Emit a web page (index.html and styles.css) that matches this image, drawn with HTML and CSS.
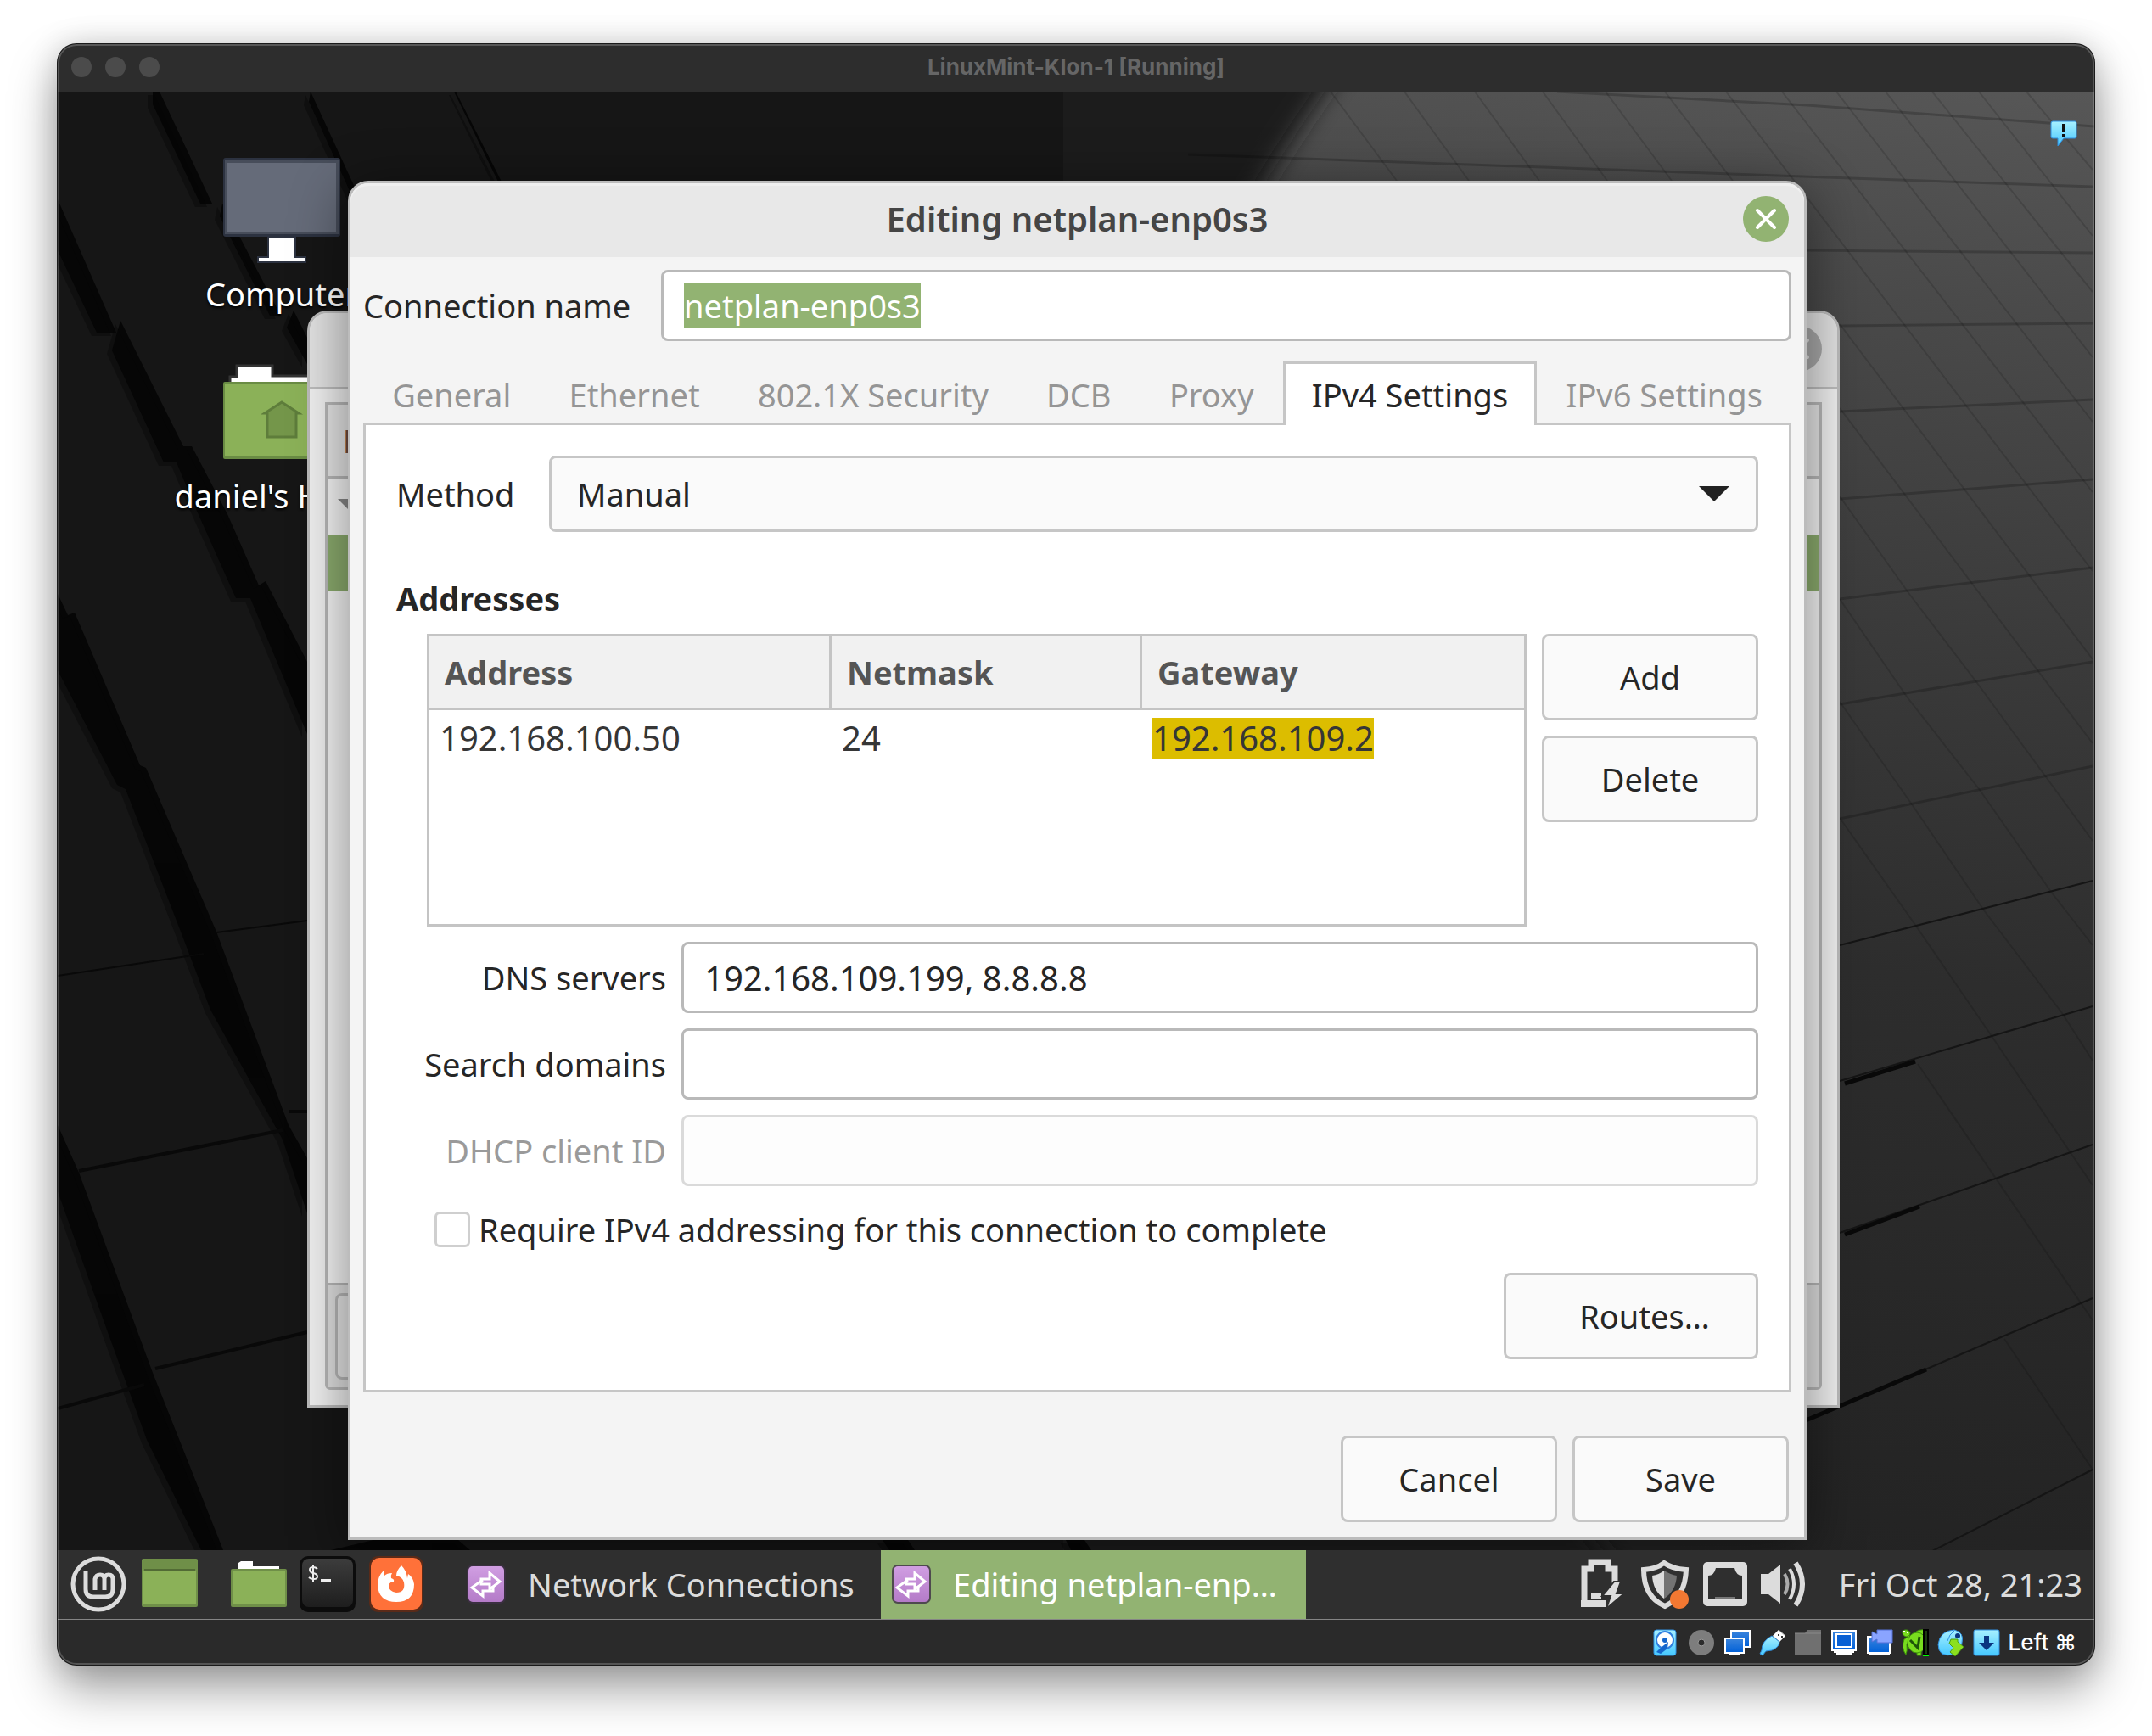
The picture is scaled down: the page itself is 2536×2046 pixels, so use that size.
FILE: index.html
```html
<!DOCTYPE html>
<html lang="en">
<head>
<meta charset="utf-8">
<title>LinuxMint-Klon-1 [Running]</title>
<link rel="stylesheet" href="styles.css">
</head>
<body>
<svg class="defs" aria-hidden="true">
  <defs>
    <linearGradient id="violet" x1="0" y1="0" x2="0" y2="1"><stop offset="0" stop-color="#d09ee2"/><stop offset="1" stop-color="#b47bc8"/></linearGradient>
    <linearGradient id="cyan" x1="0" y1="0" x2="0" y2="1"><stop offset="0" stop-color="#a8f0ff"/><stop offset="1" stop-color="#45c8ff"/></linearGradient>
    <linearGradient id="blue" x1="0" y1="0" x2="0" y2="1"><stop offset="0" stop-color="#3a84dc"/><stop offset="1" stop-color="#0060d8"/></linearGradient>
    <linearGradient id="term" x1="0" y1="0" x2="0" y2="1"><stop offset="0" stop-color="#3c3c3c"/><stop offset="1" stop-color="#1e1e1e"/></linearGradient>
    <symbol id="net" viewBox="0 0 48 48">
      <rect x="1" y="1" width="46" height="46" rx="7" fill="#3d2f45" opacity=".8"/>
      <rect x="3" y="3" width="42" height="42" rx="5" fill="url(#violet)"/>
      <path d="M28 11l12 10-12 9v-6H18v-6h10z" fill="none" stroke="#fff" stroke-width="3"/>
      <path d="M20 19L7 28l13 10v-6h12v-6" fill="none" stroke="#fff" stroke-width="3"/>
    </symbol>
  </defs>
</svg>

<main class="vm">
  <header class="vm-title">
    <div class="lights"><span></span><span></span><span></span></div>
    <h1>LinuxMint-Klon-1 [Running]</h1>
  </header>

  <section class="desktop">
    <svg class="wallpaper" viewBox="68 108 2400 1719" preserveAspectRatio="none" aria-hidden="true">
      <defs>
        <linearGradient id="sky" x1="1" y1="0" x2=".8" y2="1">
          <stop offset="0" stop-color="#575757"/><stop offset=".15" stop-color="#4a4a4a"/><stop offset=".38" stop-color="#3a3a3a"/><stop offset=".6" stop-color="#2d2d2d"/><stop offset="1" stop-color="#232323"/>
        </linearGradient>
        <linearGradient id="night" x1="0" y1="0" x2="1" y2="0"><stop offset="0" stop-color="#131313"/><stop offset="1" stop-color="#1d1d1d"/></linearGradient>
        <filter id="soft" x="-10%" y="-10%" width="120%" height="120%"><feGaussianBlur stdDeviation="14"/></filter>
      </defs>
      <rect x="68" y="108" width="2400" height="1719" fill="url(#sky)"/>
      <path d="M0 0H1640Q1540 130 1470 250Q1400 500 1500 1000T1950 1900H0z" fill="url(#night)" filter="url(#soft)"/>
      <g id="gaps" fill="#060606">
        <path d="M188 108l62 132h-14l-56-117v-15zM262 240l69 132h-13l-59-117zM346 366l16 32v31l-24-43z"/>
        <path d="M366 108l60 130h-8l-54-118zM537 108l54 106h-4l-52-106z"/>
        <path d="M68 235l69 157h-23L68 295zM142 378l74 148 10 0 42 80 37 84 8-5 49 95v85l-67-160h-17l-47-105-23-55h-15l-61-132z"/>
        <path d="M68 700l12 25 8-3 77 180 7 3 83 193 85 228 22 39v65l-29-87-85-153-35-92-65-168-10-5-70-135z"/>
        <path d="M68 1326l25 56 87 236 83 209h-26l-64-130-50-138-55-155z"/>
        <path d="M440 1815h100l14 12H390zM1040 1815h30l8 12h-30zM1256 1815h22l8 12h-24z"/>
      </g>
      <use href="#gaps" transform="translate(-6 4)" opacity=".4"/>
      <g stroke="#090909" stroke-width="4" fill="none">
        <path d="M68 1150L240 1124M255 1099L362 1085" stroke-width="2"/>
        <path d="M93 1380L333 1332M340 1310h30M68 1660L170 1632M183 1613L362 1570"/>
      </g>
      <g stroke="#000" stroke-width="3" fill="none" opacity=".2">
        <path d="M1835 108L2130 124 2468 149M1400 182L1900 200 2466 220M2129 295L2466 298M2168 384L2466 381M2168 485L2466 471M2168 588L2466 565M2168 706L2466 669M2168 830L2466 780M2168 965L2466 903"/>
      </g>
      <g stroke="#000" stroke-width="2" fill="none" opacity=".14">
        <path d="M1568 108l78 105M1655 108l76 105M1738 108l76 105M1818 108l76 105M1892 108l78 105M1962 108l80 105M2034 108l432 565M2100 108l366 472M2164 108l302 389M2222 108l244 313M2277 108l189 236M2332 108l134 170M2388 108l78 92M2168 382l298 395M2168 481l298 395M2168 585l82 115 80 105 82 112 54 74M2168 706l79 115 86 110 84 120 49 63M2168 827l85 121 85 125 92 121 36 56M2168 964l89 126 90 131 119 176M2260 1254l206 302M2362 1578l104 154"/>
      </g>
      <g stroke="#151515" stroke-width="2" fill="none">
        <path d="M2168 1114L2466 1038M2168 1274L2466 1186M2168 1453L2466 1349M2128 1674L2466 1530M2277 1828L2466 1732"/>
        <path d="M2174 1277L2257 1251M2174 1455L2262 1422M2128 1674L2270 1614" stroke="#090909" stroke-width="5"/>
      </g>
    </svg>

    <a class="shortcut computer" href="#computer">
      <svg width="140" height="126" viewBox="0 0 140 126" aria-hidden="true">
        <rect x="1" y="2" width="138" height="93" rx="3" fill="#2c3240"/>
        <rect x="3" y="5" width="134" height="87" fill="#474d5a"/>
        <rect x="6" y="8" width="128" height="81" fill="#656b79"/>
        <path d="M54 95h32v24h12v6H42v-6h12z" fill="#fff" stroke="#2c3240" stroke-width="2"/>
      </svg>
      <span>Computer</span>
    </a>
    <a class="shortcut home" href="#home">
      <svg width="140" height="114" viewBox="0 0 140 114" aria-hidden="true">
        <path d="M9 24v-8h8V3h42v12h72v9z" fill="#fff" stroke="#333" stroke-width="3"/>
        <rect x="1" y="22" width="138" height="91" rx="2" fill="#6a8c44"/>
        <rect x="3" y="25" width="134" height="85" fill="#8bb158"/>
        <path d="M50 59l20-13 20 13h-3v28H53V59z" fill="#74964a" stroke="#5e7d3b" stroke-width="3"/>
      </svg>
      <span>daniel's Home</span>
    </a>

    <section class="window connections" aria-label="Network Connections">
      <div class="c-head"><span class="close idle"><svg width="54" height="54" viewBox="0 0 54 54"><path d="M17 17l20 20M37 17L17 37" stroke="#ddd" stroke-width="4" stroke-linecap="round"/></svg></span></div>
      <div class="c-frame">
        <div class="c-cols">Name</div>
        <div class="c-group"><i></i></div>
        <div class="c-selected"></div>
        <div class="c-space"></div>
        <div class="c-tools"><button type="button" aria-label="Add connection"></button></div>
      </div>
    </section>

    <form class="window dialog">
      <header class="d-head">
        <h2>Editing netplan-enp0s3</h2>
        <button class="close" type="button" aria-label="Close">
          <svg width="54" height="54" viewBox="0 0 54 54"><path d="M17 17l20 20M37 17L17 37" stroke="#fff" stroke-width="4" stroke-linecap="round"/></svg>
        </button>
      </header>
      <div class="d-body">
        <div class="name-row">
          <label for="cname">Connection name</label>
          <input id="cname" class="field" type="text" value="netplan-enp0s3">
        </div>
        <nav class="tabs">
          <button type="button">General</button>
          <button type="button">Ethernet</button>
          <button type="button">802.1X Security</button>
          <button type="button">DCB</button>
          <button type="button">Proxy</button>
          <button type="button" class="active">IPv4 Settings</button>
          <button type="button">IPv6 Settings</button>
        </nav>
        <div class="panel">
          <div class="method">
            <label for="method">Method</label>
            <div class="select"><select id="method"><option>Manual</option></select></div>
          </div>
          <h3>Addresses</h3>
          <div class="addresses">
            <div class="table-box">
              <table>
                <thead><tr><th class="c1">Address</th><th class="c2">Netmask</th><th>Gateway</th></tr></thead>
                <tbody><tr><td>192.168.100.50</td><td>24</td><td><mark>192.168.109.2</mark></td></tr></tbody>
              </table>
            </div>
            <div class="side">
              <button class="btn" type="button">Add</button>
              <button class="btn" type="button">Delete</button>
            </div>
          </div>
          <div class="fields">
            <label for="dns">DNS servers</label>
            <input id="dns" class="field numeric" type="text" value="192.168.109.199, 8.8.8.8">
            <label for="search">Search domains</label>
            <input id="search" class="field" type="text">
            <label for="dhcp" class="off">DHCP client ID</label>
            <input id="dhcp" class="field" type="text" disabled>
          </div>
          <div class="require">
            <input id="req" type="checkbox"><label for="req">Require IPv4 addressing for this connection to complete</label>
          </div>
          <button class="btn routes" type="button">Routes…</button>
        </div>
      </div>
      <footer class="d-foot">
        <button class="btn" type="button">Cancel</button>
        <button class="btn" type="button">Save</button>
      </footer>
    </form>

    <button class="notice" type="button" aria-label="Notifications">
      <svg width="32" height="32" viewBox="0 0 32 32"><path d="M3 1h26q2 0 2 2v16q0 2-2 2H16l-7 9V21H3q-2 0-2-2V3q0-2 2-2z" fill="url(#cyan)" stroke="#2f8fe0"/><path d="M14 4h3v10h-3zM14 16h3v3h-3z" fill="#111"/></svg>
    </button>
  </section>

  <nav class="taskbar">
    <a href="#menu" aria-label="Menu"><svg width="66" height="66" viewBox="0 0 66 66" fill="none" stroke="#dcdcdc">
      <circle cx="33" cy="33" r="30" stroke-width="5"/>
      <path d="M18 17v22q0 9 9 9h14q9 0 9-9V27q0-5-5-5t-5 5v13M40 27q0-5-5-5t-6 5v13" stroke-width="5"/></svg></a>
    <a class="desk" href="#desktop" aria-label="Show desktop"><svg width="66" height="66" viewBox="0 0 66 66">
      <rect y="3" width="66" height="57" rx="2" fill="#6f8f48"/><rect x="2" y="18" width="62" height="39" fill="#8bb158"/><rect x="3" y="15" width="60" height="3" fill="#526b35"/></svg></a>
    <a href="#files" aria-label="Files"><svg width="66" height="66" viewBox="0 0 66 66">
      <path d="M9 16V8l3-2h14v6h31v4z" fill="#fff"/><rect y="15" width="66" height="45" rx="2" fill="#6f8f48"/><rect x="2" y="18" width="62" height="39" fill="#8bb158"/></svg></a>
    <a href="#terminal" aria-label="Terminal"><svg width="66" height="66" viewBox="0 0 66 66">
      <rect width="66" height="66" rx="10" fill="#0c0c0c"/><rect x="3" y="3" width="60" height="57" rx="8" fill="url(#term)"/>
      <path d="M21 15q-2-2-5-2-4 0-4 3 0 3 4 4 5 1 5 4t-4 3q-4 0-6-2M16 10v20" fill="none" stroke="#eee" stroke-width="2"/><path d="M25 27h12v3H25z" fill="#eee"/></svg></a>
    <a href="#firefox" aria-label="Firefox"><svg width="66" height="66" viewBox="0 0 66 66">
      <rect x="1" width="64" height="66" rx="11" fill="#5a2a18"/><rect x="3" y="2" width="60" height="61" rx="10" fill="#ff7139"/>
      <path d="M39 11q-6 6-6 12 7 1 9 8 2 12-9 12-9-1-9-9 2-4 6-4 1-3-3-4-1-3 1-6-6 0-9 3l-1-6q-7 7-7 17 1 20 22 20t21-21q-1-8-7-12l-1 5q-1-9-7-15z" fill="#fff"/></svg></a>
    <button class="task" type="button"><svg width="48" height="48"><use href="#net"/></svg><span>Network Connections</span></button>
    <button class="task on" type="button"><svg width="48" height="48"><use href="#net"/></svg><span>Editing netplan-enp…</span></button>
    <div class="tray">
      <svg width="54" height="60" viewBox="0 0 54 60"><path d="M4 53V12h8V4h20v8h8v18" fill="none" stroke="#dcdcdc" stroke-width="7"/><path d="M0 57V49h30v8z" fill="#dcdcdc"/><path d="M12 41h12v6H12z" fill="#dcdcdc"/><path d="M39 27L25 44h10l-5 15 21-18h-9l5-14z" fill="#dcdcdc" stroke="#2f2f2f" stroke-width="2"/></svg>
      <svg width="58" height="60" viewBox="0 0 58 60"><path d="M28 5q10 7 26 8-1 32-25 43Q4 45 4 13 19 12 28 5z" fill="none" stroke="#dcdcdc" stroke-width="6"/><path d="M28 14q-6 5-14 6 1 18 14 27z" fill="#dcdcdc"/><path d="M28 14q8 5 15 6-1 18-15 27z" fill="#737373"/><circle cx="46" cy="48" r="11" fill="#f37832"/></svg>
      <svg width="52" height="52" viewBox="0 0 52 52"><rect width="52" height="52" rx="5" fill="#dcdcdc"/><path d="M6 44V16q7 0 9-9h22q2 9 9 9v28z" fill="#2f2f2f"/><path d="M14 41h24v3H14z" fill="#777"/></svg>
      <svg width="56" height="54" viewBox="0 0 56 54"><path d="M0 15h9L23 4v46L9 39H0z" fill="#dcdcdc"/><g fill="none" stroke="#dcdcdc" stroke-width="4"><path d="M28 15q7 12 0 24" stroke="#aaa"/><path d="M34 9q10 18 0 36"/><path d="M41 2q16 25 0 50" stroke-width="6"/></g></svg>
      <time>Fri Oct 28, 21:23</time>
    </div>
  </nav>

  <footer class="status">
    <svg viewBox="0 0 32 32"><rect x="2" y="1" width="26" height="30" rx="3" fill="url(#cyan)" stroke="#2f8fe0"/><circle cx="15" cy="13" r="10" fill="#fff" stroke="#2f7fe0" stroke-width="2"/><circle cx="15" cy="13" r="3" fill="#1566cc"/><path d="M19 15l-9 7-5 5 5 2 8-6z" fill="#1566cc"/></svg>
    <svg viewBox="0 0 32 32"><circle cx="16" cy="16" r="15" fill="#7d7d7d"/><circle cx="16" cy="16" r="4" fill="#2b2b2b" stroke="#969696" stroke-width="1"/></svg>
    <svg viewBox="0 0 32 32"><rect x="9" y="2" width="22" height="19" fill="url(#blue)" stroke="#fff" stroke-width="2"/><rect x="2" y="11" width="22" height="17" fill="url(#blue)" stroke="#fff" stroke-width="2"/><path d="M7 28h13v3H7z" fill="#fff"/></svg>
    <svg viewBox="0 0 32 32"><path d="M23 1l8 7-7 7-8-7z" fill="#fff" stroke="#aaa"/><path d="M22 6h2v2h-2zM26 8h2v2h-2z" fill="#333"/><path d="M15 8l9 7q0 6-9 10l-7 1-4 5-3-2 2-4q0-11 12-17z" fill="url(#cyan)" stroke="#2f8fe0"/></svg>
    <svg viewBox="0 0 32 32"><path d="M0 5h12l3-4h16v30H0z" fill="#707070"/><path d="M0 5h31" stroke="#8a8a8a"/></svg>
    <svg viewBox="0 0 32 32"><rect x="2" y="2" width="28" height="23" fill="url(#blue)" stroke="#fff" stroke-width="2"/><rect x="7" y="6" width="18" height="15" fill="#0860d4" stroke="#fff" stroke-width="2"/><path d="M4 25h24v3h-3v3H7v-3H4z" fill="#fff"/></svg>
    <svg viewBox="0 0 32 32"><rect x="2" y="9" width="26" height="19" fill="url(#blue)" stroke="#fff" stroke-width="2"/><path d="M4 28h24v3H4z" fill="#fff"/><path d="M7 3l6 3V1h18v15H13v-4l-6 3z" fill="#8aa4ff" stroke="#5470d8"/></svg>
    <svg viewBox="0 0 32 32"><g fill="#78dc1e" stroke="#3c8f0a"><path d="M9 5q-1 5-6 7-4 10 2 18 2-4 1-12l4-6zM16 4q4-4 12-3l1 8-4 1zM18 26h5v5h-5z"/><ellipse cx="18" cy="16" rx="11" ry="12"/><path d="M1 2q6-3 9 2 0 5-5 5-5-2-4-7z"/></g><path d="M2 2h2v2H2zM6 3h2v2H6z" fill="#fff"/><path d="M10 13l9 9 2-13" fill="none" stroke="#1d5508" stroke-width="3"/><path d="M26 1h5v29h-5z" fill="#1c3a10" stroke="#000" stroke-width="2"/><path d="M25 31h7" stroke="#0f0" stroke-width="2"/></svg>
    <svg viewBox="0 0 32 32"><path d="M29 16q0 10-9 14Q1 34 1 18 3 2 20 1q12 3 9 15z" fill="url(#cyan)" stroke="#2f8fe0"/><path d="M20 2q-6 4-8 12" fill="none" stroke="#2f8fe0"/><circle cx="24" cy="8" r="3" fill="#0a3580"/><path d="M16 12h8v3l7 6-10 11-6-5 4-5-5-5z" fill="#8be01e" stroke="#4b9c10"/></svg>
    <svg viewBox="0 0 32 32"><rect x="1" y="1" width="30" height="30" rx="2" fill="url(#cyan)" stroke="#2f8fe0"/><path d="M13 8h6v8h6l-9 9-9-9h6z" fill="#0a3580"/></svg>
    <span>Left ⌘</span>
  </footer>
</main>
<script>
  const nameField = document.getElementById('cname');
  nameField.focus();
  nameField.select();
</script>
</body>
</html>
```
FILE: styles.css
```css
* { box-sizing: border-box; margin: 0; padding: 0; }

body {
  min-height: 100vh;
  padding: 52px 68px 84px;
  display: flex;
  background: #fff;
  color: #262626;
  font: 38px/48px "Noto Sans", "Open Sans", sans-serif;
}
button, input, select { font: inherit; color: inherit; }
button { cursor: pointer; }
a { color: inherit; text-decoration: none; }
svg { display: block; }
.defs { position: absolute; width: 0; height: 0; }

/* host window */
.vm {
  position: relative;
  flex: 1;
  display: flex;
  flex-direction: column;
  border-radius: 22px;
  overflow: hidden;
  background: #2a2a2a;
  box-shadow: 0 0 0 1px #1a1a1a, 0 28px 56px rgba(0, 0, 0, .38), 0 0 36px rgba(0, 0, 0, .16);
}
.vm::after {
  content: "";
  position: absolute;
  inset: 0;
  border-radius: 22px;
  box-shadow: inset 0 0 0 2px rgba(255, 255, 255, .2);
  pointer-events: none;
}
.vm-title {
  height: 56px;
  display: grid;
  grid-template-columns: 1fr auto 1fr;
  align-items: center;
  padding: 0 16px 2px;
  background: #2d2d2d;
}
.vm-title h1 { font: 700 26px/32px Inter, sans-serif; color: #666; }
.lights { display: flex; gap: 16px; }
.lights span { width: 24px; height: 24px; border-radius: 50%; background: #4b4b4b; }

/* guest desktop */
.desktop { position: relative; flex: 1; overflow: hidden; background: #151515; }
.wallpaper { position: absolute; inset: 0; width: 100%; height: 100%; }
.shortcut {
  position: absolute;
  left: 124px;
  width: 280px;
  display: flex;
  flex-direction: column;
  align-items: center;
  gap: 12px;
  color: #fff;
  text-shadow: 0 2px 3px #000;
  white-space: nowrap;
}
.computer { top: 76px; }
.home { top: 320px; gap: 18px; }
.notice { position: absolute; top: 34px; right: 20px; border: 0; background: none; }

.window { position: absolute; border: 3px solid #bcbcbc; border-radius: 24px 24px 0 0; background: #f4f4f4; }
.close {
  width: 54px;
  height: 54px;
  border: 0;
  border-radius: 50%;
  background: #92b372;
}
.close.idle { background: #a8a8a8; }

/* window behind */
.connections {
  left: 12.25%;
  right: 12.5%;
  top: 258px;
  bottom: 168px;
  display: flex;
  flex-direction: column;
  overflow: hidden;
  background: #f0f0f0;
}
.c-head { height: 90px; padding: 15px 18px; display: flex; justify-content: flex-end; border-bottom: 3px solid #bcbcbc; background: #e2e2e2; }
.c-frame { flex: 1; margin: 15px 18px 18px; display: flex; flex-direction: column; border: 3px solid #b8b8b8; border-radius: 0 0 6px 6px; background: #f6f6f6; }
.c-cols { height: 87px; padding: 18px; border-bottom: 3px solid #b8b8b8; background: #e6e6e6; font-weight: 700; color: #704c40; }
.c-group { height: 66px; padding: 24px 12px; }
.c-group i { display: block; width: 26px; height: 13px; background: #888; clip-path: polygon(0 0, 100% 0, 50% 100%); }
.c-selected { height: 66px; background: #8cac6e; }
.c-space { flex: 1; }
.c-tools { height: 123px; padding: 9px; border-top: 3px solid #b8b8b8; background: #e0e0e0; }
.c-tools button { width: 102px; height: 102px; border: 3px solid #b8b8b8; border-radius: 8px; background: #e6e6e6; }

/* connection editor */
.dialog { left: 14.25%; right: 14.125%; top: 105px; box-shadow: 0 12px 64px 4px rgba(0, 0, 0, .42); }
.d-head {
  height: 87px;
  display: grid;
  grid-template-columns: 1fr auto 1fr;
  align-items: center;
  padding: 0 18px 3px;
  border-radius: 21px 21px 0 0;
  background: #e8e8e8;
  box-shadow: inset 0 3px #efefef;
}
.d-head h2 { grid-column: 2; font-size: 40px; font-weight: 600; color: #454545; }
.d-head .close { justify-self: end; }
.d-body { padding: 15px 15px 0; }
.name-row { display: flex; align-items: center; gap: 18px; }
.name-row label { flex: 0 0 333px; }
.field {
  flex: 1;
  width: 100%;
  min-width: 0;
  height: 84px;
  padding: 0 24px;
  border: 3px solid #b9b9b9;
  border-radius: 8px;
  background: #fff;
  outline: 0;
}
.field:disabled { border-color: #dadada; background: #fdfdfd; }
.field::selection { background: #92b372; color: #fff; }
.numeric { font-size: 40px; }

.tabs { display: flex; height: 75px; margin: 24px 0 -3px; }
.tabs button {
  position: relative;
  flex: 1 1 auto;
  border: 3px solid transparent;
  border-bottom: 0;
  background: none;
  color: #959595;
  white-space: nowrap;
}
.tabs .active { z-index: 1; border-color: #c6c6c6; background: #fff; color: #262626; }

.panel { padding: 36px; border: 3px solid #c6c6c6; background: #fff; display: flex; flex-direction: column; }
.method { display: flex; align-items: center; }
.method label { flex: 0 0 180px; }
.select { flex: 1; position: relative; }
.select::after {
  content: "";
  position: absolute;
  right: 34px;
  top: 36px;
  width: 36px;
  height: 18px;
  background: #222;
  clip-path: polygon(0 0, 100% 0, 50% 100%);
  pointer-events: none;
}
select {
  width: 100%;
  height: 90px;
  padding: 0 30px;
  appearance: none;
  border: 3px solid #c6c6c6;
  border-radius: 8px;
  background: #fafafa;
}
.panel h3 { margin: 54px 0 18px; font-size: 38px; font-weight: 700; }

.addresses { display: flex; gap: 18px; margin-left: 36px; }
.table-box { flex: 1; height: 345px; border: 3px solid #c4c4c4; }
table { width: 100%; border-collapse: separate; border-spacing: 0; table-layout: fixed; }
th {
  height: 87px;
  padding: 0 18px;
  border-bottom: 3px solid #c4c4c4;
  border-right: 3px solid #c4c4c4;
  background: #f1f1f1;
  color: #555;
  text-align: left;
}
th:last-child { border-right: 0; }
.c1 { width: 474px; }
.c2 { width: 366px; }
td { padding: 9px 12px; font-size: 40px; color: #363636; }
mark { display: inline-block; background: #dcbd00; color: #363636; }
.side { width: 255px; display: flex; flex-direction: column; gap: 18px; }

.btn {
  height: 102px;
  border: 3px solid #c6c6c6;
  border-radius: 8px;
  background: #fafafa;
}
.fields {
  display: grid;
  grid-template-columns: 318px 1fr;
  gap: 18px;
  align-items: center;
  margin: 18px 0 30px;
}
.fields label { justify-self: end; }
.off { color: #9a9a9a; }
.require { display: flex; align-items: center; gap: 10px; height: 42px; margin: 0 0 30px 45px; }
.require input {
  appearance: none;
  width: 42px;
  height: 42px;
  border: 3px solid #cfcfcf;
  border-radius: 6px;
  background: #fff;
}
.routes { align-self: flex-end; width: 300px; padding-left: 32px; }
.d-foot { display: flex; justify-content: flex-end; gap: 18px; padding: 51px 18px 18px; }
.d-foot .btn { width: 255px; }

/* guest panel */
.taskbar {
  height: 81px;
  display: flex;
  align-items: center;
  gap: 15px;
  padding: 0 14px 0 15px;
  background: #2f2f2f;
  color: #dcdcdc;
}
.taskbar a { padding-bottom: 2px; }
.desk { margin: 0 24px 0 3px; }
.task {
  display: flex;
  align-items: center;
  gap: 25px;
  width: 501px;
  height: 81px;
  margin-left: 22px;
  padding: 0 12px 2px;
  border: 0;
  background: none;
  white-space: nowrap;
}
.task.on { margin-left: -15px; background: #92b372; color: #fff; }
.tray { display: flex; align-items: center; gap: 16px; margin-left: auto; padding-bottom: 2px; }
.tray time { margin-left: 20px; }

/* host status bar */
.status {
  height: 54px;
  display: flex;
  align-items: center;
  justify-content: flex-end;
  gap: 10px;
  padding: 0 21px 0 0;
  border-top: 1px solid #858585;
  background: #2a2a2a;
  color: #fff;
  font: 500 26px/32px Inter, "DejaVu Sans", sans-serif;
}
.status svg { width: 32px; height: 32px; }
```
